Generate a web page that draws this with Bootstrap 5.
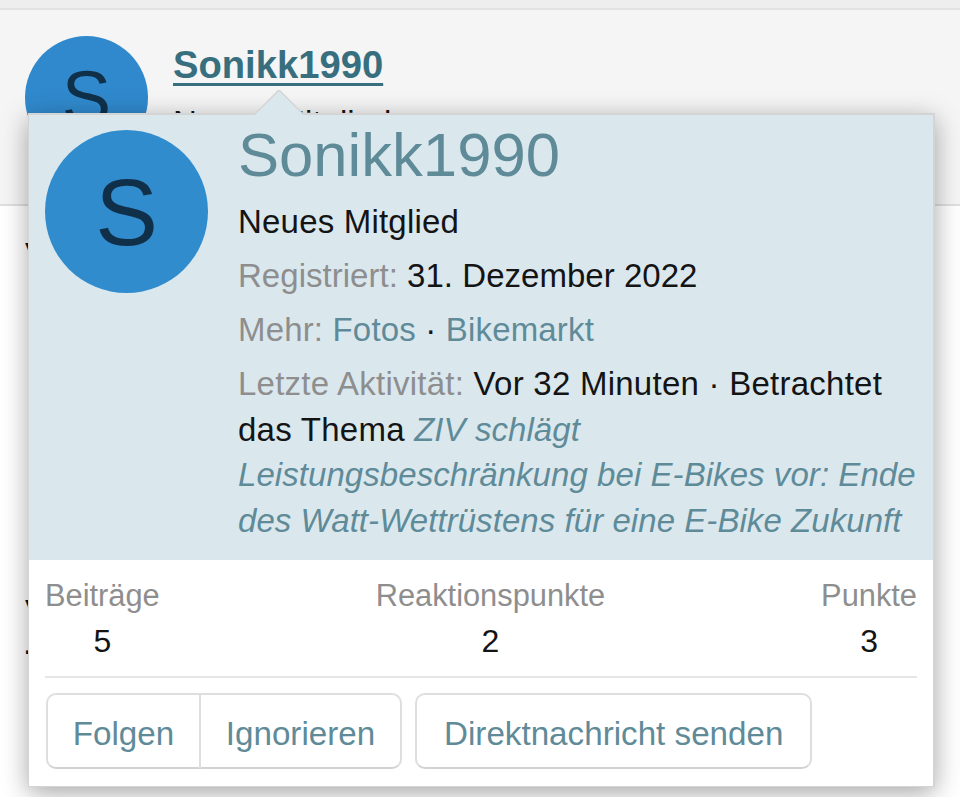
<!DOCTYPE html>
<html lang="de">
<head>
<meta charset="utf-8">
<title>Sonikk1990</title>
<link href="https://cdn.jsdelivr.net/npm/bootstrap@5.3.0/dist/css/bootstrap.min.css" rel="stylesheet">
<style>
html,body{height:797px;overflow:hidden;background:#fff;font-family:"Liberation Sans",Arial,sans-serif;color:#141414}
.stage{position:relative;width:960px;height:797px;overflow:hidden}
.topstrip{height:10px;background:#eee;border-bottom:2px solid #e2e2e2}
.band{height:196px;background:#f5f5f5;border-bottom:2px solid #dfdfdf;padding:26px 25px 0;gap:25px}
.ava-a{width:123px;height:123px;border-radius:50%;background:#3089cc;color:#10304a;font-size:74px;line-height:123px;text-align:center;flex:none}
.uname{font-size:38.2px;font-weight:700;line-height:1;color:#376f7f;text-decoration:underline;text-underline-offset:5px;text-decoration-thickness:3px;margin-top:10px;display:inline-block}
.uname:hover{color:#376f7f}
.urole{font-size:33px;line-height:46px;margin-top:15px;color:#141414}
.stray{padding:26px 0 0 25px;font-size:33px;line-height:46px;color:#141414}
.stray-b{margin-top:311px}
.stray-c{margin-top:-15px;margin-left:-2px}
.pop{position:absolute;left:28px;top:113px;width:907px;height:674px;background:#fff;border:2px solid #d4d4d4;border-bottom-width:1px;border-left-width:1px;box-shadow:0 6px 24px rgba(0,0,0,.35)}
.pop-arrow{position:absolute;left:225px;top:-25px;width:50px;height:25px}
.pop-head{background:#dae8ee;height:445px;padding:15px 15px 0 16px;gap:30px}
.ava-b{width:163px;height:163px;border-radius:50%;background:#318ccd;color:#10304a;font-size:94px;line-height:165px;text-align:center;flex:none}
.pop-name{font-size:61.6px;line-height:50px;color:#5f8b99;margin:0 0 19px;font-weight:400}
.pop-line{font-size:33px;line-height:45.5px;margin:0 0 8.5px}
.sp-a{letter-spacing:.2px}
.sp-b{letter-spacing:.03px}
.sp-c{letter-spacing:.17px}
.sp-d{letter-spacing:.25px}
.muted-x{color:#8e8e8e}
.pop-line a{color:#5f8b99;text-decoration:none}
.pop-line a.fst-italic{letter-spacing:.06px}
.pop-stats{padding:14px 16px 0 16px}
.stat-row{border-bottom:2px solid #e6e6e6;height:104px}
.stat-k{font-size:30.8px;line-height:44px;color:#8e8e8e}
.stat-v{font-size:32px;line-height:46px;color:#141414}
.pop-btns{padding:15px 17px 0 17px;gap:13px}
.btn-x{height:76px;background:#fff;border:2px solid #dedede;border-bottom-color:#d2d2d2;font-size:33.2px;line-height:1;color:#5f8b99;border-radius:10px;padding:5px 27px 0;--bs-btn-padding-y:0}
.btn-x:hover{color:#5f8b99;background:#fff;border-color:#d8d8d8}
.btn-x.split-l{width:155px;padding:5px 0 0}
.btn-x.split-r{width:202px;padding:5px 0 0;border-left-width:1px;margin-left:0}
</style>
</head>
<body>
<div class="stage">
  <div class="topstrip"></div>
  <div class="band d-flex">
    <div class="ava-a">S</div>
    <div>
      <a class="uname" href="#">Sonikk1990</a>
      <div class="urole">Neues Mitglied</div>
    </div>
  </div>
  <div class="stray">
    <div>V</div>
    <div class="stray-b">V</div>
    <div class="stray-c">.</div>
  </div>

  <div class="pop">
    <svg class="pop-arrow" viewBox="0 0 50 25" aria-hidden="true"><path d="M0 25 L25 0 L50 25 Z" fill="#dae8ee"/><path d="M0 25 L25 0 L50 25" fill="none" stroke="#d4d4d4" stroke-width="1.5"/></svg>
    <div class="pop-head d-flex">
      <div class="ava-b">S</div>
      <div class="flex-grow-1">
        <h2 class="pop-name">Sonikk1990</h2>
        <p class="pop-line sp-a">Neues Mitglied</p>
        <p class="pop-line sp-b"><span class="muted-x">Registriert:</span> 31. Dezember 2022</p>
        <p class="pop-line sp-c"><span class="muted-x">Mehr:</span> <a href="#">Fotos</a> · <a href="#">Bikemarkt</a></p>
        <p class="pop-line sp-d"><span class="muted-x">Letzte Aktivität:</span> Vor 32 Minuten · Betrachtet das Thema <a href="#" class="fst-italic">ZIV schlägt Leistungsbeschränkung bei E-Bikes vor: Ende des Watt-Wettrüstens für eine E-Bike Zukunft</a></p>
      </div>
    </div>
    <div class="pop-stats">
      <div class="stat-row d-flex justify-content-between">
        <div class="text-center"><div class="stat-k">Beiträge</div><div class="stat-v">5</div></div>
        <div class="text-center"><div class="stat-k">Reaktionspunkte</div><div class="stat-v">2</div></div>
        <div class="text-center"><div class="stat-k">Punkte</div><div class="stat-v">3</div></div>
      </div>
    </div>
    <div class="pop-btns d-flex">
      <div class="btn-group">
        <a class="btn btn-x split-l d-flex align-items-center justify-content-center" href="#">Folgen</a>
        <a class="btn btn-x split-r d-flex align-items-center justify-content-center" href="#">Ignorieren</a>
      </div>
      <a class="btn btn-x d-flex align-items-center justify-content-center" href="#">Direktnachricht senden</a>
    </div>
  </div>
</div>
<script src="https://cdn.jsdelivr.net/npm/bootstrap@5.3.0/dist/js/bootstrap.bundle.min.js"></script>
</body>
</html>
